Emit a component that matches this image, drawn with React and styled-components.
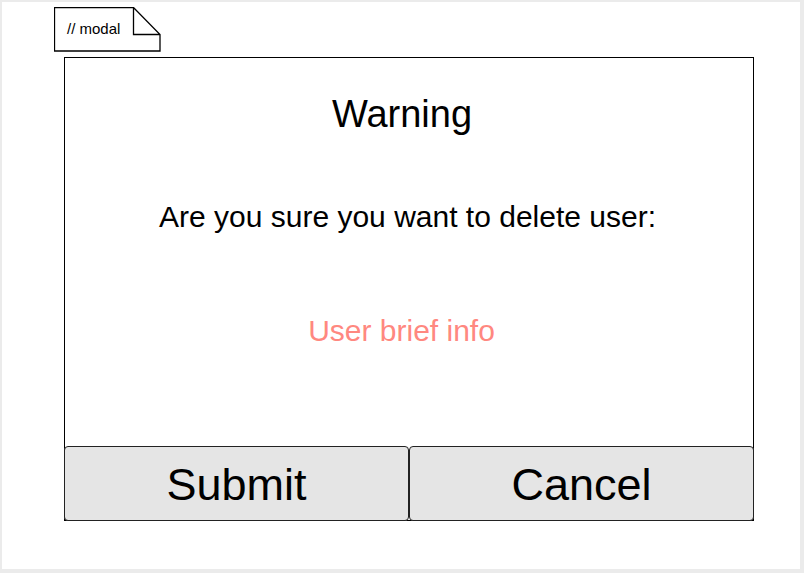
import { createGlobalStyle, styled } from 'styled-components';

const GlobalStyle = createGlobalStyle`
	html, body {
		margin: 0;
		padding: 0;
		background: #ebebeb;
	}
	body {
		font-family: 'Liberation Sans', Arial, sans-serif;
		color: #000;
	}
`;

const App = () => {
	return (
		<>
			<GlobalStyle />
			<StyledCanvas>
				<NoteTab>
					<svg width='107' height='45' viewBox='0 0 107 45'>
						<path
							d='M0.5 0.5 H79.5 L106 27.5 V44 H0.5 Z M79.5 0.5 V27.5 H106'
							fill='#fff'
							stroke='#000'
							strokeWidth='1.3'
						/>
					</svg>
					<span>// modal</span>
				</NoteTab>
				<Modal>
					<Title>Warning</Title>
					<Message>Are you sure you want to delete user:</Message>
					<UserInfo>User brief info</UserInfo>
					<ButtonRow>
						<ActionButton>Submit</ActionButton>
						<ActionButton>Cancel</ActionButton>
					</ButtonRow>
				</Modal>
			</StyledCanvas>
		</>
	);
};

const StyledCanvas = styled.main`
	margin: 2px;
	width: 798px;
	height: 567px;
	background: #fff;
	padding: 5px 0 0 52px;
	box-sizing: border-box;
	display: flex;
	flex-direction: column;
	align-items: flex-start;
`;

const NoteTab = styled.div`
	position: relative;
	width: 107px;
	height: 45px;
	display: flex;
	align-items: center;
	padding: 0 0 0 13px;
	box-sizing: border-box;
	font-size: 15px;
	svg {
		position: absolute;
		top: 0;
		left: 0;
	}
	span {
		position: relative;
		margin-top: -3px;
	}
`;

const Modal = styled.section`
	margin: 5px 0 0 10px;
	width: 690px;
	height: 464px;
	border: 1px solid #000;
	box-sizing: border-box;
	display: flex;
	flex-direction: column;
	align-items: center;
	text-align: center;
`;

const Title = styled.h2`
	margin: 36px 14px 0 0;
	font-size: 38px;
	font-weight: 400;
	line-height: 40px;
`;

const Message = styled.p`
	margin: 66px 3px 0 0;
	font-size: 30px;
	line-height: 34px;
`;

const UserInfo = styled.p`
	margin: 80px 15px 0 0;
	font-size: 30px;
	line-height: 34px;
	color: #ff8880;
`;

const ButtonRow = styled.div`
	margin: auto -1px -1px;
	width: 690px;
	display: grid;
	grid-template-columns: 1fr 1fr;
`;

const ActionButton = styled.button`
	height: 75px;
	border: 1px solid #222;
	border-radius: 4px;
	background: #e5e5e5;
	font-family: 'Liberation Sans', Arial, sans-serif;
	font-size: 45px;
	color: #000;
	padding: 2px 0 0;
	cursor: pointer;
`;

export default App;
